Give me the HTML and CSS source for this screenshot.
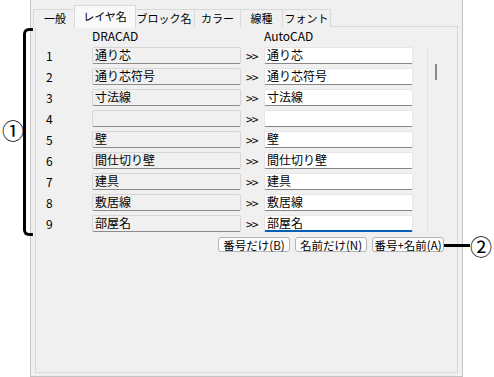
FILE: index.html
```html
<!DOCTYPE html>
<html lang="ja">
<head>
    <meta charset="UTF-8">
    <title>レイヤ名</title>
    <link rel="stylesheet" href="styles.css">
</head>
<body>
    <!-- callouts -->
    <div class="bracket"></div>
    <div class="mark mark-1">①</div>
    <div class="callout-2"><span class="lead"></span><span class="mark">②</span></div>

    <div class="window">
        <div class="tabs">
            <div class="tab">一般</div>
            <div class="tab active">レイヤ名</div>
            <div class="tab">ブロック名</div>
            <div class="tab">カラー</div>
            <div class="tab">線種</div>
            <div class="tab">フォント</div>
        </div>

        <div class="panel">
            <div class="list">
                <div class="layer-grid">
                    <div></div><div class="head">DRACAD</div><div></div><div class="head">AutoCAD</div>

                    <div class="no">1</div><div class="src">通り芯</div><div class="arrow">&gt;&gt;</div><div class="dst">通り芯</div>
                    <div class="no">2</div><div class="src">通り芯符号</div><div class="arrow">&gt;&gt;</div><div class="dst">通り芯符号</div>
                    <div class="no">3</div><div class="src">寸法線</div><div class="arrow">&gt;&gt;</div><div class="dst">寸法線</div>
                    <div class="no">4</div><div class="src"></div><div class="arrow">&gt;&gt;</div><div class="dst"></div>
                    <div class="no">5</div><div class="src">壁</div><div class="arrow">&gt;&gt;</div><div class="dst">壁</div>
                    <div class="no">6</div><div class="src">間仕切り壁</div><div class="arrow">&gt;&gt;</div><div class="dst">間仕切り壁</div>
                    <div class="no">7</div><div class="src">建具</div><div class="arrow">&gt;&gt;</div><div class="dst">建具</div>
                    <div class="no">8</div><div class="src">敷居線</div><div class="arrow">&gt;&gt;</div><div class="dst">敷居線</div>
                    <div class="no">9</div><div class="src">部屋名</div><div class="arrow">&gt;&gt;</div><div class="dst focus">部屋名</div>
                </div>
                <div class="scroll"><div class="thumb"></div></div>
            </div>

            <div class="buttons">
                <button class="btn">番号だけ(B)</button>
                <button class="btn">名前だけ(N)</button>
                <button class="btn">番号+名前(A)</button>
            </div>
        </div>
    </div>
</body>
</html>
```

FILE: styles.css
```css
* {
    margin: 0;
    padding: 0;
    box-sizing: border-box;
}

body {
    font-family: "Noto Sans CJK JP", "Noto Sans", sans-serif;
    font-size: 12px;
    color: #000;
    background-color: #fff;
    width: 494px;
    height: 377px;
    overflow: hidden;
    position: relative;
}

.window {
    margin-left: 30px;
    width: 433px;
    height: 377px;
    background-color: #f0f0f0;
    border-left: 1px solid #c4c4c4;
    border-right: 1px solid #c4c4c4;
    border-bottom: 1px solid #c4c4c4;
    padding-top: 5px;
}

/* Tabs */
.tabs {
    display: flex;
    align-items: flex-end;
    margin-left: 2px;
    height: 22px;
    position: relative;
    z-index: 1;
}

.tab {
    height: 18px;
    line-height: 16px;
    font-size: 11px;
    text-align: center;
    white-space: nowrap;
    border: 1px solid #d9d9d9;
    border-bottom: none;
    margin-right: -1px;
    background-color: #f0f0f0;
}

.tab:nth-child(1) { width: 44px; }
.tab:nth-child(2) { width: 62px; }
.tab:nth-child(3) { width: 62px; }
.tab:nth-child(4) { width: 47px; }
.tab:nth-child(5) { width: 43px; }
.tab:nth-child(6) { width: 49px; }

.tab.active {
    height: 23px;
    line-height: 20px;
    margin-left: -2px;
    margin-right: -3px;
    margin-bottom: -1px;
    background-color: #f9f9f9;
    position: relative;
    z-index: 2;
}

/* Panel */
.panel {
    margin: -1px 4px 0 4px;
    height: 347px;
    border: 1px solid #d9d9d9;
    background-color: #f0f0f0;
    padding-top: 2px;
}

.list {
    display: flex;
}

.layer-grid {
    display: grid;
    grid-template-columns: 56px 149px 23px 149px;
    grid-template-rows: 14px repeat(9, 17px);
    row-gap: 4px;
}

.head {
    line-height: 14px;
}

.no {
    padding-left: 10px;
    line-height: 17px;
}

.src, .dst {
    line-height: 14px;
    padding-left: 2px;
    border: 1px solid #d6d6d6;
    border-bottom-color: #8a8a8a;
    border-radius: 2px;
    white-space: nowrap;
    overflow: hidden;
}

.src {
    background-color: #f0f0f0;
}

.dst {
    background-color: #fff;
    border-color: #e6e6e6;
    border-bottom-color: #868686;
}

.dst.focus {
    border-bottom: 2px solid #005fb8;
}

.arrow {
    padding-left: 5px;
    line-height: 17px;
    letter-spacing: -1px;
}

.scroll {
    margin-left: 14px;
    margin-top: 18px;
    height: 185px;
    border-left: 1px solid #e2e2e2;
    width: 29px;
}

.thumb {
    margin-left: 7px;
    margin-top: 17px;
    width: 2px;
    height: 16px;
    background-color: #8a8a8a;
}

/* Buttons */
.buttons {
    display: flex;
    justify-content: flex-end;
    gap: 5px;
    margin-top: 5px;
    padding-right: 13px;
}

.btn {
    font-family: inherit;
    font-size: 11.5px;
    height: 15px;
    line-height: 12px;
    width: 72px;
    padding: 0;
    white-space: nowrap;
    background-color: #fdfdfd;
    border: 1px solid #b4b4b4;
    border-radius: 3px;
    color: #000;
}

/* Callouts */
.bracket {
    position: absolute;
    left: 23px;
    top: 28px;
    width: 10px;
    height: 208px;
    border: 3px solid #000;
    border-right: none;
    border-radius: 6px 0 0 6px;
}

.mark {
    font-size: 22px;
    line-height: 22px;
}

.mark-1 {
    position: absolute;
    left: 2px;
    top: 118px;
}

.callout-2 {
    position: absolute;
    left: 444px;
    top: 234px;
    display: flex;
    align-items: center;
}

.lead {
    width: 26px;
    height: 3px;
    background-color: #000;
}
```
